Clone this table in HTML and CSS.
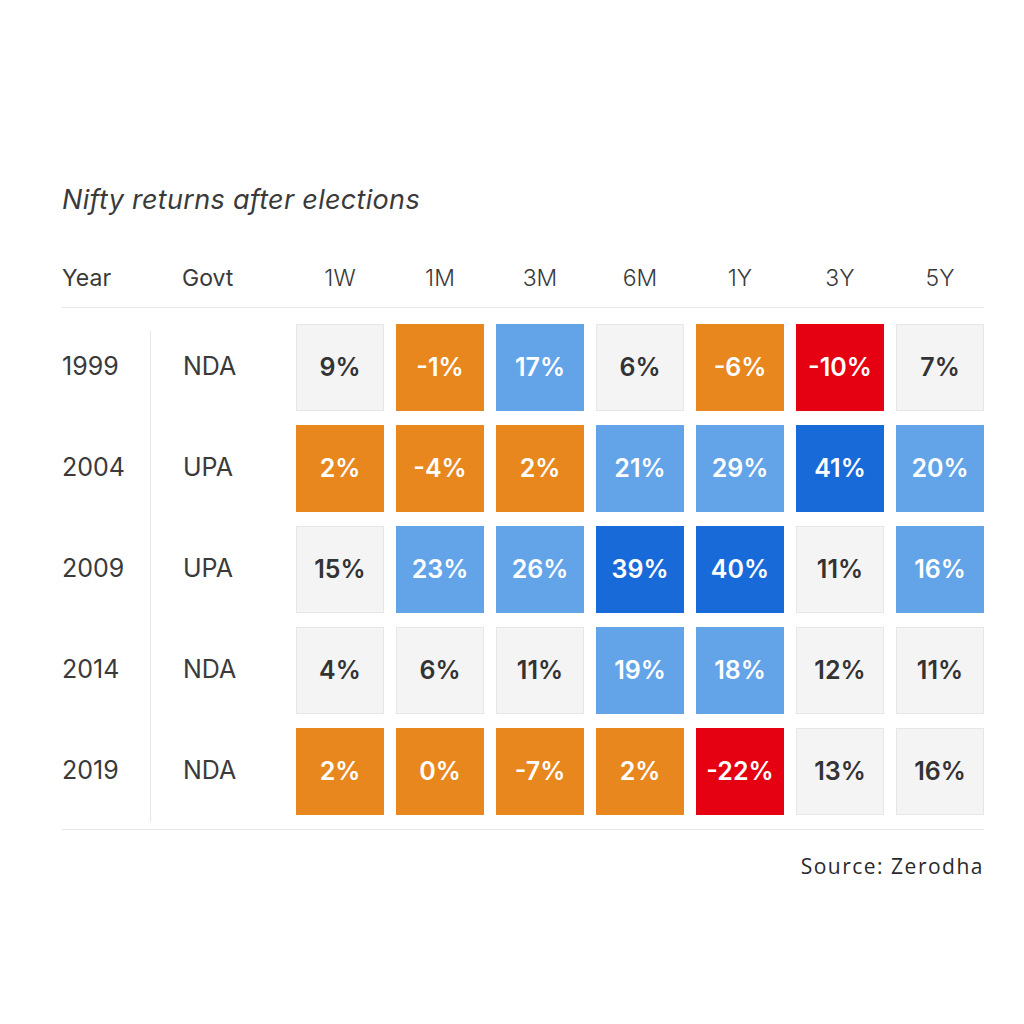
FILE: index.html
```html
<!DOCTYPE html>
<html lang="en">
<head>
<meta charset="utf-8">
<title>Nifty returns after elections</title>
<link rel="stylesheet" href="styles.css">
</head>
<body>
<div class="chart">
  <h1 class="title">Nifty returns after elections</h1>
  <div class="head">
    <div class="h-year">Year</div>
    <div class="h-govt">Govt</div>
    <div class="h-periods">
      <span>1W</span><span>1M</span><span>3M</span><span>6M</span><span>1Y</span><span>3Y</span><span>5Y</span>
    </div>
  </div>
  <div class="body">
    <div class="years">
      <div class="lbl">1999</div>
      <div class="lbl">2004</div>
      <div class="lbl">2009</div>
      <div class="lbl">2014</div>
      <div class="lbl">2019</div>
    </div>
    <div class="divider"></div>
    <div class="govts">
      <div class="lbl">NDA</div>
      <div class="lbl">UPA</div>
      <div class="lbl">UPA</div>
      <div class="lbl">NDA</div>
      <div class="lbl">NDA</div>
    </div>
    <div class="cells">
      <div class="c g">9%</div><div class="c o">-1%</div><div class="c lb">17%</div><div class="c g">6%</div><div class="c o">-6%</div><div class="c r">-10%</div><div class="c g">7%</div>
      <div class="c o">2%</div><div class="c o">-4%</div><div class="c o">2%</div><div class="c lb">21%</div><div class="c lb">29%</div><div class="c db">41%</div><div class="c lb">20%</div>
      <div class="c g">15%</div><div class="c lb">23%</div><div class="c lb">26%</div><div class="c db">39%</div><div class="c db">40%</div><div class="c g">11%</div><div class="c lb">16%</div>
      <div class="c g">4%</div><div class="c g">6%</div><div class="c g">11%</div><div class="c lb">19%</div><div class="c lb">18%</div><div class="c g">12%</div><div class="c g">11%</div>
      <div class="c o">2%</div><div class="c o">0%</div><div class="c o">-7%</div><div class="c o">2%</div><div class="c r">-22%</div><div class="c g">13%</div><div class="c g">16%</div>
    </div>
  </div>
  <div class="source">Source: Zerodha</div>
</div>
</body>
</html>
```
FILE: styles.css
```css
html, body {
  margin: 0;
  background: #ffffff;
}
body {
  font-family: "Inter", "Liberation Sans", sans-serif;
  color: #333333;
}
.chart {
  width: 922px;
  padding: 180px 0 0 62px;
}
.title {
  margin: 0;
  font-size: 27px;
  font-weight: 400;
  font-style: italic;
  line-height: 40px;
  color: #3a3a3a;
  letter-spacing: 0.3px;
}
.head {
  display: flex;
  margin-top: 43px;
  height: 30px;
  padding-bottom: 14px;
  border-bottom: 1px solid #e8e8e8;
  line-height: 30px;
  font-size: 23px;
  color: #3a3a3a;
}
.h-year {
  width: 88px;
}
.h-govt {
  width: 114px;
  padding-left: 32px;
}
.h-periods {
  display: grid;
  grid-template-columns: repeat(7, 88px);
  column-gap: 12px;
  text-align: center;
  font-weight: 300;
}
.body {
  display: flex;
  padding: 16px 0 14px;
  border-bottom: 1px solid #e8e8e8;
}
.years, .govts {
  display: flex;
  flex-direction: column;
  gap: 14px;
}
.years {
  width: 88px;
}
.divider {
  width: 1px;
  background: #e6e6e6;
  margin: 7px 0 -7px;
}
.govts {
  width: 113px;
  padding-left: 32px;
}
.lbl {
  height: 87px;
  line-height: 84px;
  font-size: 25px;
  color: #3a3a3a;
}
.cells {
  display: grid;
  grid-template-columns: repeat(7, 88px);
  grid-auto-rows: 87px;
  gap: 14px 12px;
}
.c {
  display: flex;
  align-items: center;
  justify-content: center;
  box-sizing: border-box;
  padding-bottom: 2px;
  font-size: 25px;
  font-weight: 600;
  color: #ffffff;
}
.g {
  background: #f4f4f4;
  border: 1px solid #e6e6e6;
  color: #333333;
}
.o { background: #e9871f; }
.lb { background: #63a4e9; }
.db { background: #196ad9; }
.r { background: #e50012; }
.source {
  margin-top: 22px;
  text-align: right;
  font-family: "Open Sans", "Liberation Sans", sans-serif;
  font-size: 21px;
  letter-spacing: 1.5px;
  line-height: 28px;
  color: #2a2a2a;
}
```
